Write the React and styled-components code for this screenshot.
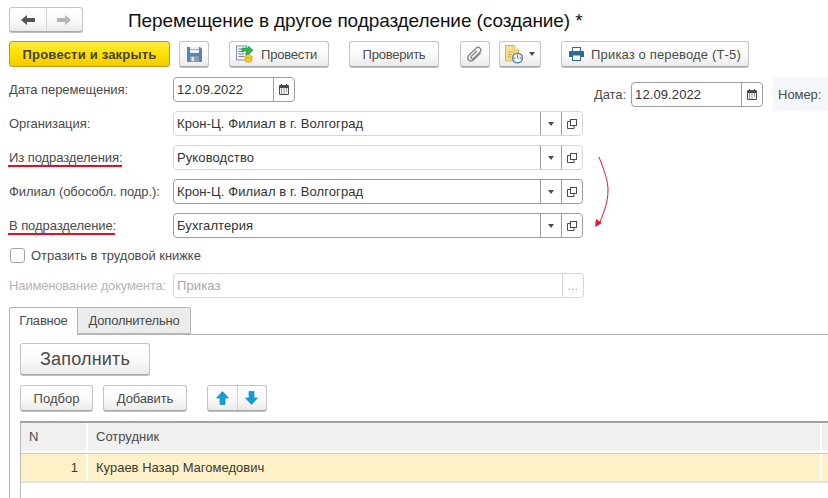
import React from "react";
import styled, { createGlobalStyle, css } from "styled-components";

const GlobalStyle = createGlobalStyle`
  html, body {
    margin: 0;
    padding: 0;
    background: #fff;
    overflow: hidden;
  }
  body {
    font-family: "Liberation Sans", Arial, sans-serif;
    font-size: 13px;
    color: #4a4a4a;
  }
`;

const Page = styled.div`
  position: relative;
  width: 828px;
  height: 498px;
  overflow: hidden;
`;

const Head = styled.div`
  display: flex;
  align-items: center;
  padding: 7px 0 0 9px;
  height: 25px;
`;

const Title = styled.h1`
  margin: 0 0 0 45px;
  font-size: 19px;
  font-weight: normal;
  letter-spacing: -0.085px;
  color: #111;
  white-space: nowrap;
  position: relative;
  top: 1px;
`;

const btnBase = css`
  box-sizing: border-box;
  display: flex;
  align-items: center;
  justify-content: center;
  flex-shrink: 0;
  border: 1px solid #c4c4c4;
  border-bottom-color: #a8a8a8;
  border-radius: 3px;
  background: linear-gradient(#ffffff 0%, #f9f9f9 55%, #ebebeb 100%);
  box-shadow: 0 1px 0 #bdbdbd;
  font-family: inherit;
  color: #4a4a4a;
  padding: 0;
  white-space: nowrap;
`;

const NavGroup = styled.div`
  ${btnBase}
  width: 74px;
  height: 25px;
`;

const NavPart = styled.div`
  flex: 1;
  height: 100%;
  display: flex;
  align-items: center;
  justify-content: center;
  & + & {
    border-left: 1px solid #d4d4d4;
  }
`;

const Toolbar = styled.div`
  display: flex;
  height: 26px;
  margin: 9px 0 0 9px;
`;

const Button = styled.button`
  ${btnBase}
  width: ${(p) => p.$w}px;
  height: ${(p) => p.$h || 26}px;
  margin-left: ${(p) => p.$ml || 0}px;
  padding-right: ${(p) => p.$pr || 0}px;
  gap: ${(p) => p.$gap || 0}px;
  font-size: ${(p) => p.$fs || 13}px;
  letter-spacing: ${(p) => p.$ls ?? -0.12}px;
`;

const PrimaryButton = styled(Button)`
  background: linear-gradient(#ffe94a 0%, #fee300 45%, #f6c800 100%);
  border-color: #b99a1a;
  box-shadow: none;
  color: #47422a;
  font-weight: bold;
`;

const Caret = styled.span`
  width: 0;
  height: 0;
  border-left: 3.5px solid transparent;
  border-right: 3.5px solid transparent;
  border-top: 4px solid #4b4b4b;
`;

const FormArea = styled.div`
  display: flex;
  margin-top: 10px;
`;

const FormColumn = styled.div`
  width: 594px;
  flex-shrink: 0;
  padding-left: 9px;
  box-sizing: border-box;
`;

const Row = styled.div`
  display: flex;
  align-items: center;
  height: 25px;
  margin-bottom: 9px;
`;

const Label = styled.label`
  position: relative;
  width: 164px;
  flex-shrink: 0;
  white-space: nowrap;
  letter-spacing: ${(p) => (p.$disabled ? -0.16 : -0.07)}px;
  color: ${(p) => (p.$disabled ? "#b5b5b5" : "#4a4a4a")};
`;

const LabelText = styled.span`
  position: relative;
  ${(p) =>
    p.$marked &&
    css`
      &::after {
        content: "";
        position: absolute;
        left: -1px;
        right: 1px;
        bottom: -2px;
        height: 2px;
        background: #f5081f;
      }
    `}
`;

const Field = styled.div`
  box-sizing: border-box;
  display: flex;
  align-items: stretch;
  height: 25px;
  width: ${(p) => p.$w}px;
  flex-shrink: 0;
  border: 1px solid ${(p) => (p.$dark ? "#9c9c9c" : "#d6d6d6")};
  border-radius: 4px;
  background: #fff;
`;

const FieldValue = styled.div`
  flex: 1;
  min-width: 0;
  padding-left: 3px;
  line-height: 23px;
  font-size: 13px;
  letter-spacing: 0.1px;
  color: ${(p) => (p.$disabled ? "#a8a8a8" : "#333")};
  white-space: nowrap;
`;

const FieldBtn = styled.div`
  box-sizing: border-box;
  width: 21px;
  flex-shrink: 0;
  display: flex;
  align-items: center;
  justify-content: center;
  border-left: 1px solid ${(p) => (p.$dark ? "#9c9c9c" : "#d6d6d6")};
  color: #b0b0b0;
`;

const CheckRow = styled.div`
  display: flex;
  align-items: center;
  height: 15px;
  margin: 10px 0 10px 1px;
  gap: 6px;
  letter-spacing: -0.05px;
`;

const CheckBox = styled.span`
  box-sizing: border-box;
  width: 15px;
  height: 15px;
  border: 1px solid #a4a4a4;
  border-radius: 3px;
  background: #fff;
`;

const SideColumn = styled.div`
  display: flex;
  height: 34px;
  flex: 1;
  min-width: 0;
`;

const SideDate = styled.div`
  display: flex;
  align-items: center;
  gap: 5px;
  height: 25px;
  margin-top: 5px;
  letter-spacing: -0.07px;
`;

const SideNumber = styled.div`
  display: flex;
  align-items: flex-start;
  margin-left: 10px;
  padding: 10px 0 0 5px;
  height: 24px;
  flex: 1;
  background: #f5f7fc;
  white-space: nowrap;
  gap: 7px;
  letter-spacing: -0.07px;
`;

const NumberInput = styled.div`
  width: 20px;
  height: 25px;
  margin-top: -5px;
  border: 1px solid #d6d6d6;
  border-radius: 3px;
  background: #fff;
`;

const Tabs = styled.div`
  display: flex;
  margin: 0 0 0 9px;
  height: 28px;
  box-sizing: border-box;
  position: relative;
  z-index: 1;
`;

const Tab = styled.div`
  box-sizing: border-box;
  width: ${(p) => p.$w}px;
  height: ${(p) => (p.$active ? 28 : 27)}px;
  line-height: 26px;
  text-align: center;
  border: 1px solid #b4b4b4;
  border-left-width: ${(p) => (p.$active ? 1 : 0)}px;
  border-bottom-width: ${(p) => (p.$active ? 0 : 1)}px;
  border-radius: ${(p) => (p.$active ? "3px 0 0 0" : "0 3px 0 0")};
  background: ${(p) => (p.$active ? "#fff" : "#ececec")};
  letter-spacing: -0.2px;
`;

const TabPanel = styled.div`
  margin: -1px 0 0 9px;
  border-top: 1px solid #b4b4b4;
  border-left: 1px solid #b4b4b4;
  padding: 8px 0 0 10px;
  height: 170px;
`;

const Commands = styled.div`
  display: flex;
  margin-top: 10px;
`;

const ArrowGroup = styled.div`
  ${btnBase}
  width: 60px;
  height: 26px;
  margin-left: 20px;
`;

const Grid = styled.div`
  width: 830px;
  margin-top: 10px;
  border-top: 2px solid #a2a2a2;
  border-left: 1px solid #b8b8b8;
  margin-right: -20px;
  height: 90px;
  box-sizing: border-box;
`;

const GridHead = styled.div`
  display: flex;
  height: 31px;
  border-bottom: 1px solid #c8c8c8;
  box-sizing: border-box;
`;

const GridRow = styled.div`
  display: flex;
  height: 29px;
  box-sizing: border-box;
  border-bottom: 2px solid #e4e4e4;
`;

const HeadCell = styled.div`
  box-sizing: border-box;
  width: ${(p) => p.$w}px;
  flex-shrink: 0;
  background: #f0f0f0;
  border-right: 2px solid #fff;
  border-bottom: 2px solid #fff;
  padding-left: ${(p) => p.$pl || 8}px;
  line-height: 28px;
`;

const Cell = styled.div`
  box-sizing: border-box;
  width: ${(p) => p.$w}px;
  flex-shrink: 0;
  background: #fef0c7;
  border-right: 2px solid #fff;
  padding: 0 8px;
  line-height: 27px;
  color: #3a3a3a;
  text-align: ${(p) => p.$align || "left"};
`;

const CurveArrow = styled.svg`
  position: absolute;
  left: 590px;
  top: 152px;
`;

const LeftArrow = ({ color }) => (
  <svg width="16" height="12" viewBox="0 0 16 12">
    <path d="M1 6 L7 1 V4 H15 V8 H7 V11 Z" fill={color} />
  </svg>
);

const RightArrow = ({ color }) => (
  <svg width="16" height="12" viewBox="0 0 16 12">
    <path d="M15 6 L9 1 V4 H1 V8 H9 V11 Z" fill={color} />
  </svg>
);

const SaveIcon = () => (
  <svg width="15" height="16" viewBox="0 0 15 16">
    <path d="M0 1 H13 L15 3 V15 a1 1 0 0 1 -1 1 H1 a1 1 0 0 1 -1 -1 Z" fill="#4d87b8" />
    <rect x="3" y="1" width="9" height="6" fill="#eaf2f8" />
    <rect x="3" y="3" width="9" height="1" fill="#8fb5d2" />
    <rect x="3" y="10" width="9" height="6" fill="#8e9aa6" />
    <rect x="4.5" y="11" width="2.5" height="4" fill="#e5e9ed" />
  </svg>
);

const PostIcon = () => (
  <svg width="18" height="18" viewBox="0 0 18 18">
    <rect x="0.5" y="1" width="10" height="14" fill="#eef3f8" stroke="#7f96ad" />
    <path d="M2.5 4 H8 M2.5 6.5 H8 M2.5 9 H8 M2.5 11.5 H8" stroke="#6f8296" />
    <path d="M6 3 H12 V1 L17 5 L13 9.5 L9.5 9.5 L11.5 6 H6 Z" fill="#2cb84a" stroke="#1c8c38" strokeWidth="0.5" />
    <ellipse cx="12.5" cy="11.5" rx="3.5" ry="1.6" fill="#f6d23a" stroke="#c49a12" strokeWidth="0.5" />
    <path d="M9 11.5 V16 C9 17.8 16 17.8 16 16 V11.5 C16 13 9 13 9 11.5 Z" fill="#f3c61e" stroke="#c49a12" strokeWidth="0.5" />
  </svg>
);

const ClipIcon = () => (
  <svg width="16" height="17" viewBox="0 0 16 17" fill="none">
    <path
      d="M13.5 7 L7 13.6 C5.2 15.4 2.7 15.3 1.6 14 C0.4 12.6 0.6 10.6 2.2 9 L8.8 2.4 C10.1 1.1 12 1.1 13.1 2.2 C14.2 3.4 14.1 5 12.9 6.2 L6.8 12.2 C6.1 12.9 5.1 12.9 4.5 12.3 C3.9 11.7 4 10.8 4.7 10.1 L10 4.8"
      stroke="#8a8a8a"
      strokeWidth="1.4"
    />
  </svg>
);

const TasksIcon = () => (
  <svg width="18" height="19" viewBox="0 0 18 19">
    <path d="M0.5 0.5 H9 L13.5 5 V16 H0.5 Z" fill="#f8de8a" stroke="#d9b450" />
    <path d="M9 0.5 V5 H13.5" fill="#fff4cc" stroke="#d9b450" />
    <path d="M3 7 H9 M3 9.5 H7 M3 12 H6" stroke="#cfa94a" />
    <circle cx="12.5" cy="13" r="4.8" fill="#fff" stroke="#3f93cf" strokeWidth="1.6" />
    <circle cx="12.5" cy="10" r="0.8" fill="#e0334a" />
    <circle cx="9.7" cy="13" r="0.8" fill="#e0334a" />
    <circle cx="15.3" cy="13" r="0.8" fill="#e0334a" />
    <path d="M12.5 13 V11 M12.5 13 L14 14.2" stroke="#555" strokeWidth="0.8" />
  </svg>
);

const PrinterIcon = () => (
  <svg width="15" height="14" viewBox="0 0 15 14">
    <rect x="3.5" y="0.5" width="8" height="4" fill="#fff" stroke="#2d6b94" />
    <path d="M1 4 H14 a1 1 0 0 1 1 1 V10 H0 V5 a1 1 0 0 1 1 -1 Z" fill="#2d6b94" />
    <rect x="3.5" y="8" width="8" height="5.5" fill="#fff" stroke="#2d6b94" />
  </svg>
);

const CalendarIcon = () => (
  <svg width="10" height="11" viewBox="0 0 10 11">
    <rect x="0" y="1" width="10" height="10" rx="1" fill="#4a4a4a" />
    <rect x="2" y="0" width="1" height="2" fill="#4a4a4a" />
    <rect x="7" y="0" width="1" height="2" fill="#4a4a4a" />
    <rect x="1" y="4" width="8" height="6" fill="#f4f4f4" />
    <path d="M2 5 H3 M4.5 5 H5.5 M7 5 H8 M2 7 H3 M4.5 7 H5.5 M7 7 H8 M2 9 H3 M4.5 9 H5.5" stroke="#4a4a4a" />
  </svg>
);

const OpenIcon = () => (
  <svg width="10" height="10" viewBox="0 0 10 10" fill="none" stroke="#4a4a4a">
    <rect x="3.5" y="0.5" width="6" height="6" />
    <path d="M3.5 2.5 H0.5 V9.5 H7 V6.5" />
  </svg>
);

const MoveArrow = ({ down }) => (
  <svg width="13" height="14" viewBox="0 0 13 14" style={{ transform: down ? "rotate(180deg)" : undefined }}>
    <path d="M6.5 0.5 L12.5 7 H9 V13.5 H4 V7 H0.5 Z" fill="#0fa0dc" stroke="#0b7fb4" strokeWidth="0.6" />
  </svg>
);

const refFields = [
  { label: "Организация:", value: "Крон-Ц. Филиал в г. Волгоград" },
  { label: "Из подразделения:", value: "Руководство", marked: true },
  { label: "Филиал (обособл. подр.):", value: "Крон-Ц. Филиал в г. Волгоград", dark: true },
  { label: "В подразделение:", value: "Бухгалтерия", marked: true, dark: true },
];

const App = () => (
  <Page>
    <GlobalStyle />
    <Head>
      <NavGroup>
        <NavPart><LeftArrow color="#555" /></NavPart>
        <NavPart><RightArrow color="#b4b4b4" /></NavPart>
      </NavGroup>
      <Title>Перемещение в другое подразделение (создание) *</Title>
    </Head>

    <Toolbar>
      <PrimaryButton $w={161} $ls={0.2}>Провести и закрыть</PrimaryButton>
      <Button $w={30} $ml={9}><SaveIcon /></Button>
      <Button $w={100} $ml={20} $gap={7} $pr={5} $ls={-0.2}><PostIcon />Провести</Button>
      <Button $w={90} $ml={20} $ls={-0.25}>Проверить</Button>
      <Button $w={30} $ml={21}><ClipIcon /></Button>
      <Button $w={42} $ml={9} $gap={6}><TasksIcon /><Caret /></Button>
      <Button $w={188} $ml={20} $gap={7} $ls={0.15}><PrinterIcon />Приказ о переводе (Т-5)</Button>
    </Toolbar>

    <FormArea>
      <FormColumn>
        <Row>
          <Label>Дата перемещения:</Label>
          <Field $w={122} $dark>
            <FieldValue>12.09.2022</FieldValue>
            <FieldBtn $dark><CalendarIcon /></FieldBtn>
          </Field>
        </Row>
        {refFields.map((f) => (
          <Row key={f.label}>
            <Label><LabelText $marked={f.marked}>{f.label}</LabelText></Label>
            <Field $w={410} $dark={f.dark}>
              <FieldValue>{f.value}</FieldValue>
              <FieldBtn $dark><Caret /></FieldBtn>
              <FieldBtn $dark><OpenIcon /></FieldBtn>
            </Field>
          </Row>
        ))}
        <CheckRow>
          <CheckBox />
          Отразить в трудовой книжке
        </CheckRow>
        <Row>
          <Label $disabled>Наименование документа:</Label>
          <Field $w={411}>
            <FieldValue $disabled>Приказ</FieldValue>
            <FieldBtn>...</FieldBtn>
          </Field>
        </Row>
      </FormColumn>

      <SideColumn>
        <SideDate>
          Дата:
          <Field $w={132} $dark>
            <FieldValue>12.09.2022</FieldValue>
            <FieldBtn $dark><CalendarIcon /></FieldBtn>
          </Field>
        </SideDate>
        <SideNumber>
          Номер:
          <NumberInput />
        </SideNumber>
      </SideColumn>
    </FormArea>

    <Tabs>
      <Tab $active $w={69}>Главное</Tab>
      <Tab $w={113}>Дополнительно</Tab>
    </Tabs>
    <TabPanel>
      <Button $w={130} $h={32} $fs={18} $ls={0.2}>Заполнить</Button>
      <Commands>
        <Button $w={73} $ls={0}>Подбор</Button>
        <Button $w={84} $ml={10} $ls={-0.15}>Добавить</Button>
        <ArrowGroup>
          <NavPart><MoveArrow /></NavPart>
          <NavPart><MoveArrow down /></NavPart>
        </ArrowGroup>
      </Commands>
      <Grid>
        <GridHead>
          <HeadCell $w={67} $pl={8}>N</HeadCell>
          <HeadCell $w={734}>Сотрудник</HeadCell>
          <HeadCell $w={20} />
        </GridHead>
        <GridRow>
          <Cell $w={67} $align="right">1</Cell>
          <Cell $w={734}>Кураев Назар Магомедович</Cell>
          <Cell $w={20} />
        </GridRow>
      </Grid>
    </TabPanel>

    <CurveArrow width="20" height="82" viewBox="0 0 20 82" fill="none">
      <path d="M9 5 C14 18 18 28 18 38 C18 50 14 60 10 70" stroke="#f0102a" />
      <path d="M5 75 L6 67 L12 71 Z" fill="#f0102a" />
    </CurveArrow>
  </Page>
);

export default App;
